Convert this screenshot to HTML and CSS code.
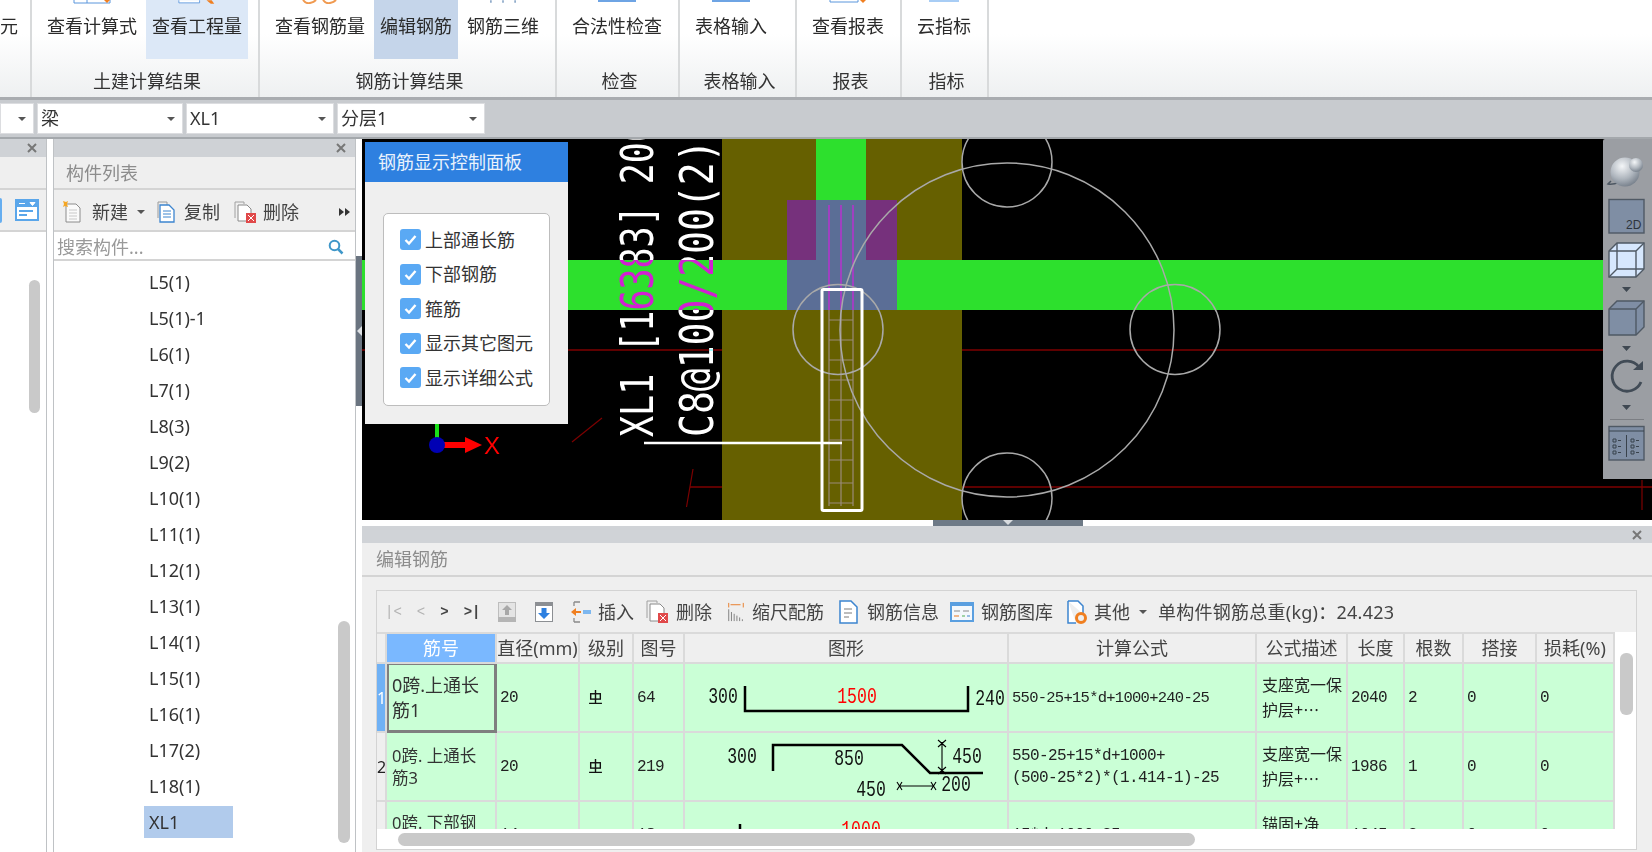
FILE: index.html
```html
<!DOCTYPE html>
<html lang="zh-CN">
<head>
<meta charset="utf-8">
<title>编辑钢筋</title>
<link rel="stylesheet" href="styles.css">
</head>
<body>
<header class="ribbon">
  <section class="group g0">
    <div class="btns end"><div class="btn first"><span>元</span></div></div>
    <div class="glabel"></div>
  </section>
  <section class="group g1">
    <div class="btns">
      <div class="btn"><svg class="ico" viewBox="0 0 38 4"><path d="M1 0v3h36V0M14 0v3" fill="#fff" stroke="#5a96dc"/><path d="M31 0h6l-3 3z" fill="#f07f20"/></svg><span>查看计算式</span></div>
      <div class="btn hl"><svg class="ico" viewBox="0 0 44 4"><path d="M1 0v3h24V0" fill="#fff" stroke="#5a96dc"/><path d="M33 0h6l3 4h-4z" fill="#f07f20"/></svg><span>查看工程量</span></div>
    </div>
    <div class="glabel">土建计算结果</div>
  </section>
  <section class="group g2">
    <div class="btns">
      <div class="btn"><svg class="ico" viewBox="0 0 38 4"><path d="M2 0q3 4 7 3t6-3M22 0q3 4 7 3t6-3" fill="none" stroke="#f09a50" stroke-width="2"/></svg><span>查看钢筋量</span></div>
      <div class="btn sel"><span>编辑钢筋</span></div>
      <div class="btn"><svg class="ico" viewBox="0 0 44 4"><path d="M8 0v3M22 0v3M36 0v3" stroke="#6a8fb8" stroke-width="1.5"/></svg><span>钢筋三维</span></div>
    </div>
    <div class="glabel">钢筋计算结果</div>
  </section>
  <section class="group g3">
    <div class="btns"><div class="btn"><svg class="ico" viewBox="0 0 38 4"><rect width="38" height="2" fill="#6ea4e4"/></svg><span>合法性检查</span></div></div>
    <div class="glabel">检查</div>
  </section>
  <section class="group g4">
    <div class="btns"><div class="btn"><svg class="ico" viewBox="0 0 38 4"><rect width="38" height="2" fill="#6ea4e4"/></svg><span>表格输入</span></div></div>
    <div class="glabel">表格输入</div>
  </section>
  <section class="group g5">
    <div class="btns"><div class="btn"><svg class="ico" viewBox="0 0 38 4"><path d="M1 0v2h28V0" fill="#fff" stroke="#5a96dc"/><path d="M31 0h6l-3 3z" fill="#f07f20"/></svg><span>查看报表</span></div></div>
    <div class="glabel">报表</div>
  </section>
  <section class="group g6">
    <div class="btns"><div class="btn"><svg class="ico" viewBox="0 0 38 4"><rect x="4" width="30" height="2" fill="#a8cdf5"/></svg><span>云指标</span></div></div>
    <div class="glabel">指标</div>
  </section>
</header>

<div class="selbar">
  <div class="combo c0"><i class="tri"></i></div>
  <div class="combo c1"><span>梁</span><i class="tri"></i></div>
  <div class="combo c2"><span>XL1</span><i class="tri"></i></div>
  <div class="combo c2"><span>分层1</span><i class="tri"></i></div>
</div>

<main class="main">
  <aside class="panel panel-a">
    <div class="phead"><svg class="x" viewBox="0 0 10 10"><path d="M1 1l8 8M9 1l-8 8"/></svg></div>
    <div class="ptitle"></div>
    <div class="ptool end">
      <i class="seltab"></i>
      <svg class="win" viewBox="0 0 24 24"><rect x="1" y="2" width="22" height="20" fill="#fff" stroke="#5aa6ea" stroke-width="2"/><rect x="1" y="2" width="22" height="7" fill="#5aa6ea"/><path d="M4 5.500h6M15 4.500h5l-2.500 3z" stroke="#fff" fill="#fff"/><path d="M4 13h14M4 17h8" stroke="#5aa6ea" stroke-width="2"/></svg>
    </div>
    <div class="abody"><div class="athumb"></div></div>
  </aside>

  <aside class="panel panel-b">
    <div class="phead"><svg class="x" viewBox="0 0 10 10"><path d="M1 1l8 8M9 1l-8 8"/></svg></div>
    <div class="ptitle">构件列表</div>
    <div class="ptool">
      <svg class="tic new" viewBox="0 0 18 22"><path d="M3 3h10l4 4v14H3z" fill="#fafafa" stroke="#8c8c8c"/><path d="M6 9h8M6 12h8M6 15h8M6 18h8" stroke="#c8c8c8"/><path d="M0 0l3 1 2-1-1 3 1 3-3-1-2 1 1-3z" fill="#f5a623"/></svg>
      <span class="ttext first">新建</span><i class="tri t1"></i>
      <svg class="tic cp" viewBox="0 0 18 22"><path d="M1 1h9v3M1 1v16" fill="none" stroke="#9a9a9a"/><path d="M3 4h9l5 5v12H3z" fill="#fff" stroke="#3d85cf" stroke-width="1.300"/><path d="M6 10h8M6 13h8M6 16h8" stroke="#3d85cf"/></svg>
      <span class="ttext">复制</span>
      <svg class="tic del" viewBox="0 0 22 22"><path d="M1 1h9v2M1 1v16" fill="none" stroke="#a0a0a0"/><path d="M4 4h9l4 4v12H4z" fill="#fff" stroke="#8a8a8a"/><rect x="12" y="12" width="10" height="10" fill="#e0494a"/><path d="M14 14l6 6M20 14l-6 6" stroke="#fff"/></svg>
      <span class="ttext">删除</span>
      <span class="more"><i class="rtri"></i><i class="rtri"></i></span>
    </div>
    <div class="search"><span>搜索构件...</span>
      <svg class="mag" viewBox="0 0 16 16"><circle cx="6.500" cy="6.500" r="4.800" fill="none" stroke="#3f97c9" stroke-width="2"/><path d="M10 10l4.500 4.500" stroke="#3f97c9" stroke-width="2.500"/></svg>
    </div>
    <div class="list">
      <div class="item">L5(1)</div><div class="item">L5(1)-1</div><div class="item">L6(1)</div><div class="item">L7(1)</div>
      <div class="item">L8(3)</div><div class="item">L9(2)</div><div class="item">L10(1)</div><div class="item">L11(1)</div>
      <div class="item">L12(1)</div><div class="item">L13(1)</div><div class="item">L14(1)</div><div class="item">L15(1)</div>
      <div class="item">L16(1)</div><div class="item">L17(2)</div><div class="item">L18(1)</div><div class="item cur">XL1</div>
      <div class="lthumb"></div>
    </div>
  </aside>

  <div class="split"><div class="split-h"><i class="ltri"></i></div></div>

  <div class="right">
    <div class="canvas">
      <svg class="cad" viewBox="362 139 1290 381">
        <rect x="362" y="139" width="1290" height="381" fill="#000"/>
        <path d="M362 350H1652M690 487H1652" stroke="#7d0000" stroke-width="1.500" fill="none"/>
        <path d="M572 442L602 418M686.500 507L693 469M1642 480V510" stroke="#7d0000" stroke-width="1.200" fill="none"/>
        <rect x="722" y="139" width="240" height="381" fill="#666000"/>
        <rect x="362" y="260" width="1290" height="50" fill="#2de02d"/>
        <rect x="816" y="139" width="50" height="61" fill="#2de02d"/>
        <rect x="787" y="200" width="110" height="60" fill="#76317c"/>
        <rect x="787" y="260" width="110" height="50" fill="#5b6e96"/>
        <rect x="816" y="200" width="50" height="60" fill="#5b6e96"/>
        <path d="M829 205V310M841 205V310M853 205V310" stroke="#a040c0" stroke-width="2" fill="none"/>
        <path d="M829 310V506M841 310V506M853 310V506M829 320H853M829 340H853M829 360H853M829 380H853M829 400H853M829 420H853M829 440H853M829 460H853M829 483H853M829 503H853" stroke="#9a8a78" stroke-width="1.200" fill="none"/>
        <g fill="none" stroke="#a9a9a9" stroke-width="1.500">
          <circle cx="1007" cy="330" r="167"/><circle cx="1007" cy="162" r="45"/><circle cx="1007" cy="498" r="45"/><circle cx="1175" cy="329.500" r="45"/><circle cx="838" cy="329.500" r="45"/>
        </g>
        <rect x="822" y="289.500" width="40" height="221" rx="1.500" fill="none" stroke="#fff" stroke-width="3"/>
        <path d="M644 443H842" stroke="#fff" stroke-width="2.500"/>
        <text class="cadtext l1" transform="translate(653 437) rotate(-90) scale(1 1.280)">XL1 [16383] 200</text>
        <text class="cadtext l2" transform="translate(713 437) rotate(-90) scale(1 1.200)">C8@100/200(2)</text>
        <rect x="435" y="415" width="4" height="24" fill="#19e019"/>
        <path d="M437 442H465V437L482 445L465 453V448H437z" fill="#ff0000"/>
        <circle cx="437" cy="445" r="8" fill="#0000b4"/>
        <text class="axis" x="484" y="454">X</text>
      </svg>

      <div class="float">
        <div class="float-h">钢筋显示控制面板</div>
        <div class="float-b">
          <div class="checks">
            <label class="chk"><svg class="box" viewBox="0 0 21 21"><rect width="21" height="21" rx="3" fill="#5aa9f4"/><path d="M5.500 11l3.500 3.500 6.500-7.500" fill="none" stroke="#fff" stroke-width="2.400"/></svg>上部通长筋</label>
            <label class="chk"><svg class="box" viewBox="0 0 21 21"><rect width="21" height="21" rx="3" fill="#5aa9f4"/><path d="M5.500 11l3.500 3.500 6.500-7.500" fill="none" stroke="#fff" stroke-width="2.400"/></svg>下部钢筋</label>
            <label class="chk"><svg class="box" viewBox="0 0 21 21"><rect width="21" height="21" rx="3" fill="#5aa9f4"/><path d="M5.500 11l3.500 3.500 6.500-7.500" fill="none" stroke="#fff" stroke-width="2.400"/></svg>箍筋</label>
            <label class="chk"><svg class="box" viewBox="0 0 21 21"><rect width="21" height="21" rx="3" fill="#5aa9f4"/><path d="M5.500 11l3.500 3.500 6.500-7.500" fill="none" stroke="#fff" stroke-width="2.400"/></svg>显示其它图元</label>
            <label class="chk"><svg class="box" viewBox="0 0 21 21"><rect width="21" height="21" rx="3" fill="#5aa9f4"/><path d="M5.500 11l3.500 3.500 6.500-7.500" fill="none" stroke="#fff" stroke-width="2.400"/></svg>显示详细公式</label>
          </div>
        </div>
      </div>

      <div class="rail">
        <svg viewBox="0 0 49 340" width="49" height="340">
          <defs><radialGradient id="ball" cx="0.400" cy="0.300" r="0.800"><stop offset="0" stop-color="#f4f6f8"/><stop offset="0.550" stop-color="#aeb5bd"/><stop offset="1" stop-color="#68727e"/></radialGradient></defs>
          <path d="M8 42L5 45Q12 47 30 36" fill="none" stroke="#4d5762" stroke-width="1.500"/>
          <circle cx="22" cy="33" r="14.500" fill="url(#ball)"/>
          <circle cx="33" cy="26" r="7" fill="url(#ball)"/>
          <rect x="6" y="60.500" width="35" height="33.500" fill="#7f8ea4" stroke="#4f5964" stroke-width="1.400"/>
          <text class="rail2d" x="23" y="90">2D</text>
          <g stroke="#4f5964" stroke-width="1.400">
            <path d="M6 112l8-8h27v26l-8 8H6z" fill="#d6e7fd"/>
            <path d="M14 104v26h27M14 130l-8 8" fill="none"/>
            <path d="M6 112h27v26M33 112l8-8" fill="none"/>
            <path d="M6 170l8-8h27v26l-8 8H6z" fill="#7f8ea4"/>
            <path d="M6 170h27v26M33 170l8-8" fill="none"/>
            <rect x="6" y="287.500" width="35" height="33.500" fill="#7f8ea4"/>
          </g>
          <path d="M19 148h9l-4.500 5zM19 207h9l-4.500 5zM19 266h9l-4.500 5z" fill="#3f4852"/>
          <path d="M36 228A15 15 0 1 0 38 243" fill="none" stroke="#414b56" stroke-width="2.800"/>
          <path d="M30 231h10v-9z" fill="#414b56"/>
          <path d="M7 280.500H41" stroke="#7b7e83" stroke-width="1.200"/>
          <path d="M6 292H41M23.500 296V318M10 300h3v3h-3zM10 306h3v3h-3zM10 312h3v3h-3zM28 300h3v3h-3zM28 306h3v3h-3zM28 312h3v3h-3zM15 301.500h3M15 307.500h3M15 313.500h3M33 301.500h3M33 307.500h3M33 313.500h3" fill="none" stroke="#39424c" stroke-width="1"/>
        </svg>
      </div>
    </div>

    <div class="strip"><div class="handle"><i class="dtri"></i></div></div>

    <section class="editor">
      <div class="phead ehead"><svg class="x" viewBox="0 0 10 10"><path d="M1 1l8 8M9 1l-8 8"/></svg></div>
      <div class="ptitle etitle">编辑钢筋</div>
      <div class="ebody">
        <div class="box-out">
          <div class="etool">
            <div class="nav"><span class="dim">|&lt;</span><span class="dim">&lt;</span><span>&gt;</span><span>&gt;|</span></div>
            <svg class="tool-i w18" viewBox="0 0 18 20"><rect x="0.500" y="0.500" width="17" height="19" fill="#e4e4e4" stroke="#bdbdbd"/><rect y="15" width="18" height="5" fill="#b5b5b5"/><path d="M9 3l5 5h-3v5H7V8H4z" fill="#a8a8a8"/></svg>
            <svg class="tool-i w18 ml19" viewBox="0 0 18 20"><rect x="0.500" y="0.500" width="17" height="19" fill="#fff" stroke="#8c8f93"/><rect width="18" height="4" fill="#8c8f93"/><path d="M9 17l-6-6h3.500V6h5v5H15z" fill="#2e80e0"/></svg>
            <div class="tool ml18"><svg class="w20" viewBox="0 0 20 22"><path d="M3 1h6M3 1v4M3 21h6M3 21v-4" fill="none" stroke="#8a8a8a" stroke-width="1.300"/><path d="M0 11l5-4v3h5v2H5v3z" fill="#f07f20"/><rect x="12" y="9" width="8" height="4" fill="#7db7ef"/></svg><span>插入</span></div>
            <div class="tool"><svg class="w23" viewBox="0 0 23 24"><path d="M1 1h10v2M1 1v17" fill="none" stroke="#a0a0a0"/><path d="M4 4h10l4 4v13H4z" fill="#fff" stroke="#8a8a8a"/><rect x="12" y="13" width="10" height="10" fill="#e0494a"/><path d="M14 15l6 6M20 15l-6 6" stroke="#fff"/></svg><span>删除</span></div>
            <div class="tool ml15"><svg class="w18" viewBox="0 0 18 22"><path d="M1 1v5M17 1v5M3 3h11" stroke="#e8761e" fill="none"/><path d="M1 8v13M4 11v10M7 13v8M10 15v6M13 17v4M16 19v2" stroke="#7a7a7a"/></svg><span>缩尺配筋</span></div>
            <div class="tool ml13"><svg class="w23" viewBox="0 0 23 24"><path d="M3 1h11l6 6v16H3z" fill="#fff" stroke="#3d85cf" stroke-width="1.500"/><path d="M7 9h8M7 13h8M7 17h5" stroke="#7a7a7a"/></svg><span>钢筋信息</span></div>
            <div class="tool ml11"><svg class="w24" viewBox="0 0 24 22"><rect x="1" y="2" width="22" height="18" fill="#f4f8fc" stroke="#5a9fe0" stroke-width="2"/><rect x="1" y="2" width="22" height="3" fill="#5a9fe0"/><path d="M4 10h6M13 10h6" stroke="#8a8a8a"/><path d="M4 15h5" stroke="#e8761e"/><path d="M12 15h3" stroke="#4caf50"/><path d="M17 15h3" stroke="#3d85cf"/></svg><span>钢筋图库</span></div>
            <div class="tool ml13"><svg class="w21" viewBox="0 0 21 24"><path d="M2 1h10l5 5v8M2 1v22h8" fill="#fff" stroke="#3d85cf" stroke-width="1.500"/><circle cx="15" cy="18" r="4.500" fill="none" stroke="#f07f20" stroke-width="3"/></svg><span>其他</span></div>
            <i class="tri t2"></i>
            <span class="total">单构件钢筋总重(kg)：24.423</span>
          </div>
          <div class="mid">
            <div class="twrap">
              <table class="grid">
                <colgroup><col class="c-r"><col class="c-id"><col class="c-dia"><col class="c-lvl"><col class="c-no"><col class="c-shape"><col class="c-f"><col class="c-d"><col class="c-len"><col class="c-cnt"><col class="c-lap"><col class="c-loss"></colgroup>
                <thead>
                  <tr><th></th><th class="hot">筋号</th><th>直径(mm)</th><th>级别</th><th>图号</th><th>图形</th><th>计算公式</th><th>公式描述</th><th>长度</th><th>根数</th><th>搭接</th><th>损耗(%)</th></tr>
                </thead>
                <tbody>
                  <tr>
                    <td class="rh rh-on">1</td><td class="idc cursor">0跨.上通长筋1</td><td class="m">20</td>
                    <td class="lv"><svg class="grade" viewBox="0 0 14 14"><rect x="2.500" y="3.500" width="9" height="5" fill="none" stroke="#111" stroke-width="1.300"/><path d="M7 0v13M1 12.500h12" stroke="#111" stroke-width="1.300"/></svg></td>
                    <td class="m">64</td>
                    <td class="sh"><svg class="shape" viewBox="1 0 321 67">
                      <path d="M61 22V47H284V22" fill="none" stroke="#000" stroke-width="2.500"/>
                      <text class="st" transform="translate(39 39) scale(1 1.300)">300</text>
                      <text class="st red" transform="translate(173 39) scale(1 1.300)">1500</text>
                      <text class="st" transform="translate(306 41) scale(1 1.300)">240</text>
                    </svg></td>
                    <td class="m f one">550-25+15*d+1000+240-25</td>
                    <td class="d">支座宽一保护层+⋯</td><td class="m">2040</td><td class="m">2</td><td class="m">0</td><td class="m">0</td>
                  </tr>
                  <tr>
                    <td class="rh">2</td><td class="idc small">0跨. 上通长筋3</td><td class="m">20</td>
                    <td class="lv"><svg class="grade" viewBox="0 0 14 14"><rect x="2.500" y="3.500" width="9" height="5" fill="none" stroke="#111" stroke-width="1.300"/><path d="M7 0v13M1 12.500h12" stroke="#111" stroke-width="1.300"/></svg></td>
                    <td class="m">219</td>
                    <td class="sh"><svg class="shape" viewBox="1 0 321 67">
                      <path d="M89 38V12H218L246 40H299" fill="none" stroke="#000" stroke-width="2.500"/>
                      <path d="M258 9V40M254 7L262 14M262 7L254 14M254 34L262 41M262 34L254 41M215 53H250M213 49L218 57M218 49L213 57M247 49L252 57M252 49L247 57" fill="none" stroke="#000" stroke-width="1.100"/>
                      <text class="st" transform="translate(58 30) scale(1 1.300)">300</text>
                      <text class="st" transform="translate(165 32) scale(1 1.300)">850</text>
                      <text class="st" transform="translate(283 30) scale(1 1.300)">450</text>
                      <text class="st" transform="translate(187 63) scale(1 1.300)">450</text>
                      <text class="st" transform="translate(272 58) scale(1 1.300)">200</text>
                    </svg></td>
                    <td class="m f">550-25+15*d+1000+<br>(500-25*2)*(1.414-1)-25</td>
                    <td class="d">支座宽一保护层+⋯</td><td class="m">1986</td><td class="m">1</td><td class="m">0</td><td class="m">0</td>
                  </tr>
                  <tr class="cut">
                    <td class="rh"></td><td class="idc small up">0跨. 下部钢</td><td class="m">14</td>
                    <td class="lv"></td>
                    <td class="m">18</td>
                    <td class="sh"><svg class="shape" viewBox="1 0 321 67">
                      <path d="M56 22V47" stroke="#000" stroke-width="2.500"/>
                      <text class="st red" transform="translate(177 34) scale(1 1.300)">1000</text>
                    </svg></td>
                    <td class="m f">15*d+1000-25</td>
                    <td class="d up">锚固+净</td><td class="m">1045</td><td class="m">3</td><td class="m">0</td><td class="m">0</td>
                  </tr>
                </tbody>
              </table>
            </div>
            <div class="vtrack"><div class="vthumb"></div></div>
          </div>
          <div class="htrack"><div class="hthumb"></div></div>
        </div>
      </div>
    </section>
  </div>
</main>
</body>
</html>
```

FILE: styles.css
```css
* { box-sizing: border-box; }
html, body { margin: 0; padding: 0; }
body {
  width: 1652px;
  height: 852px;
  overflow: hidden;
  background: #fff;
  color: #333;
  font-family: "Noto Sans", "Noto Sans CJK SC", sans-serif;
  font-size: 18px;
  line-height: 24px;
}
svg { display: block; }

/* ribbon */
.ribbon {
  display: flex;
  height: 100px;
  border-bottom: 3px solid #a9acb0;
  background: linear-gradient(#fff 35%, #eef0f1);
}
.group { display: flex; flex-direction: column; border-right: 2px solid #d8dadb; }
.g0 { width: 32px; }
.g1 { width: 228px; }
.g2 { width: 297px; }
.g3 { width: 123px; }
.g4 { width: 117px; }
.g5 { width: 105px; }
.g6 { width: 87px; }
.btns { display: flex; gap: 3px; height: 59px; padding-left: 9px; }
.btns.end { padding-left: 0; }
.btn { position: relative; height: 59px; padding: 14px 6px 0; color: #2b2b2b; white-space: nowrap; }
.btn.first { padding-left: 0; }
.btn .ico { position: absolute; top: 0; left: 50%; width: 38px; height: 4px; margin-left: -19px; }
.btn.hl { background: #dce8f7; }
.btn.sel { background: #c5d5ea; }
.glabel { height: 38px; padding-left: 4px; line-height: 44px; text-align: center; color: #333; }

/* selector bar */
.selbar {
  display: flex;
  gap: 3px;
  height: 39px;
  padding-top: 3px;
  background: #c8cbcf;
  border-bottom: 2px solid #a4a8ac;
}
.combo {
  position: relative;
  height: 31px;
  padding-left: 3px;
  line-height: 29px;
  background: #fff;
  border: 1px solid #dcdde0;
  color: #333;
}
.c0 { width: 34px; }
.c1 { width: 146px; }
.c2 { width: 148px; }
.tri {
  display: block;
  width: 0;
  height: 0;
  border-style: solid;
  border-width: 4px 4px 0;
  border-color: #555 transparent transparent;
}
.combo .tri { position: absolute; right: 7px; top: 13px; }

/* main */
.main { display: flex; height: 713px; }
.panel { display: flex; flex-direction: column; background: #fff; }
.panel-a { width: 47px; border-right: 1px solid #bfc2c5; }
.panel-b { width: 303px; margin-left: 6px; border-left: 1px solid #bfc2c5; border-right: 1px solid #bfc2c5; }
.phead {
  display: flex;
  justify-content: flex-end;
  align-items: center;
  height: 18px;
  padding-right: 9px;
  background: #cfd2d6;
}
.x { width: 10px; height: 10px; }
.x path { stroke: #777; stroke-width: 2; fill: none; }
.ptitle {
  height: 33px;
  padding: 4px 0 0 12px;
  background: #efefef;
  border-bottom: 2px solid #d4d4d4;
  color: #8c8c8c;
}
.ptool {
  display: flex;
  align-items: center;
  height: 42px;
  padding: 3px 0 0 9px;
  background: #efefef;
  border-bottom: 2px solid #d4d4d4;
  color: #444;
}
.ptool.end { justify-content: space-between; padding: 0 7px 0 0; }
.seltab { display: block; width: 2px; height: 25px; background: #66aef0; border-radius: 0 3px 3px 0; }
.win { width: 24px; height: 24px; }
.abody { flex: 1; padding: 48px 0 0 29px; }
.athumb { width: 11px; height: 133px; border-radius: 6px; background: #c9c9c9; }
.tic { flex: none; }
.tic.new { width: 18px; height: 22px; }
.tic.cp { width: 18px; height: 22px; margin-left: 12px; }
.tic.del { width: 22px; height: 22px; margin-left: 14px; }
.ttext { margin-left: 9px; }
.ttext.first { margin-left: 11px; }
.tic.del + .ttext { margin-left: 7px; }
.t1 { margin-left: 9px; }
.more { display: flex; margin-left: auto; margin-right: 5px; }
.rtri {
  display: block;
  width: 0;
  height: 0;
  margin-left: 1px;
  border-style: solid;
  border-width: 4px 0 4px 5px;
  border-color: transparent transparent transparent #333;
}
.search {
  display: flex;
  align-items: center;
  justify-content: space-between;
  height: 29px;
  padding: 2px 11px 0 3px;
  border-bottom: 2px solid #d4d4d4;
  color: #999;
}
.mag { width: 16px; height: 16px; }
.list { position: relative; flex: 1; display: flex; flex-direction: column; gap: 4px; padding: 5px 0 0 90px; }
.item { width: 89px; height: 32px; padding-left: 5px; line-height: 32px; color: #333; }
.item.cur { background: #b1cbec; }
.lthumb { position: absolute; right: 5px; top: 360px; width: 12px; height: 222px; border-radius: 6px; background: #c9c9c9; }

.split { width: 6px; background: #fff; padding-top: 117px; }
.split-h { display: flex; align-items: center; justify-content: center; height: 150px; background: #6a7480; }
.ltri { display: block; width: 0; height: 0; border-style: solid; border-width: 5px 5px 5px 0; border-color: transparent #dfe2e5 transparent transparent; }

.right { width: 1290px; }
.canvas { position: relative; height: 381px; background: #000; overflow: hidden; }
.cad { width: 1290px; height: 381px; }
.cadtext { fill: #fff; font-family: "DejaVu Sans Mono", monospace; mix-blend-mode: difference; }
.cadtext.l1 { font-size: 35px; }
.cadtext.l2 { font-size: 38px; }
.axis { fill: #f00; font-family: "Liberation Sans", sans-serif; font-size: 24px; }

.float { position: absolute; left: 3px; top: 3px; width: 203px; height: 282px; background: #efefef; }
.float-h { height: 40px; padding: 8px 0 0 13px; background: #2e80e0; color: #eaf2fc; }
.float-b { padding: 31px 18px 0 18px; }
.checks {
  display: flex;
  flex-direction: column;
  height: 193px;
  padding: 15px 0 0 16px;
  background: #fff;
  border: 1px solid #bdbdbd;
  border-radius: 5px;
  gap: 13.500px;
}
.chk { display: flex; align-items: center; gap: 4px; height: 21px; color: #333; }
.box { width: 21px; height: 21px; flex: none; }

.rail { position: absolute; right: 0; top: 0; width: 49px; height: 340px; background: #9b9ea3; border-radius: 2px 0 0 0; }
.rail2d { fill: #2d343c; font-family: "Liberation Sans", sans-serif; font-size: 12px; }

.strip { height: 6px; padding-left: 571px; background: #fff; }
.handle { display: flex; justify-content: center; width: 150px; height: 6px; background: #6e7a87; }
.dtri { display: block; width: 0; height: 0; border-style: solid; border-width: 5px 5px 0; border-color: #d8dbdf transparent transparent; }

/* editor */
.editor { height: 326px; background: #efefef; }
.ehead { height: 17px; padding-right: 10px; background: #d0d3d7; }
.etitle { padding-left: 14px; height: 34px; }
.ebody { padding: 13px 0 0 14px; }
.box-out { width: 1261px; height: 260px; border: 1px solid #d3d3d3; background: #fff; }
.etool {
  display: flex;
  align-items: center;
  height: 41px;
  padding-left: 8px;
  background: #efefef;
  color: #444;
}
.nav { display: flex; gap: 15px; width: 113px; font-family: "Liberation Mono", monospace; font-size: 14px; font-weight: bold; color: #444; }
.nav .dim { color: #b3b3b3; font-weight: normal; }
.tool-i { flex: none; }
.w18 { width: 18px; height: 20px; }
.w20 { width: 20px; height: 22px; }
.w21 { width: 21px; height: 24px; }
.w23 { width: 23px; height: 24px; }
.w24 { width: 24px; height: 22px; }
.ml19 { margin-left: 19px; }
.tool { display: flex; align-items: center; gap: 7px; margin-left: 12px; white-space: nowrap; }
.tool.ml18 { margin-left: 18px; }
.tool.ml15 { margin-left: 15px; }
.tool.ml13 { margin-left: 13px; }
.tool.ml11 { margin-left: 11px; }
.t2 { margin-left: 9px; }
.total { margin-left: 11px; letter-spacing: 0.250px; white-space: nowrap; }

.mid { display: flex; height: 197px; }
.twrap { width: 1238px; height: 197px; overflow: hidden; }
.grid { width: 1238px; table-layout: fixed; border-collapse: separate; border-spacing: 0; }
.c-r { width: 10px; }
.c-id { width: 110px; }
.c-dia { width: 83px; }
.c-lvl { width: 54px; }
.c-no { width: 51px; }
.c-shape { width: 324px; }
.c-f { width: 248px; }
.c-d { width: 91px; }
.c-len { width: 57px; }
.c-cnt { width: 59px; }
.c-lap { width: 73px; }
.c-loss { width: 78px; }
.grid th {
  height: 32px;
  padding: 0;
  background: #efefef;
  border-right: 2px solid #dadada;
  border-bottom: 2px solid #dadada;
  border-top: 2px solid #dadada;
  font-weight: normal;
  color: #444;
  white-space: nowrap;
  overflow: hidden;
}
.grid th.hot { background: #7ab8ff; color: #fff; }
.grid td {
  height: 69px;
  padding: 0 0 0 3px;
  background: #caffd6;
  border-right: 2px solid #dadada;
  border-bottom: 2px solid #dadada;
  color: #222;
  vertical-align: middle;
}
.grid td.rh { padding: 0; background: #efefef; text-align: center; font-size: 16px; overflow: hidden; }
.grid td.rh-on { background: #6fb1f5; color: #fff; }
.grid td.idc { padding: 0 3px 0 5px; line-height: 25px; color: #333; }
.grid td.idc.cursor { padding-left: 3px; }
.grid td.idc.small { font-size: 16.500px; line-height: 22px; }
.grid td.cursor { border: 2px solid #7f7f7f; border-width: 1px 3px 3px 2px; }
.grid td.m { font-family: "Liberation Mono", monospace; font-size: 16px; line-height: 22px; letter-spacing: -0.600px; }
.grid td.f.one { font-size: 15.500px; letter-spacing: -0.730px; }
.grid td.d { padding: 0 0 0 5px; font-size: 16px; line-height: 25px; }
.grid td.lv { padding-left: 8px; }
.grid td.sh { padding: 0; }
.grade { width: 15px; height: 15px; }
.shape { width: 321px; height: 67px; }
.st { fill: #111; font-family: "Liberation Mono", monospace; font-size: 16.500px; text-anchor: middle; }
.st.red { fill: #f00; }
.cut td { vertical-align: top; padding-top: 22px; }
.grid .cut td.idc, .grid .cut td.d { padding-top: 10px; }
.grid .cut td.sh { padding-top: 0; }

.vtrack { width: 21px; padding: 21px 0 0 5px; background: #fff; }
.vthumb { width: 13px; height: 62px; border-radius: 6px; background: #c9c9c9; }
.htrack { height: 20px; padding: 4px 0 0 21px; background: #fff; }
.hthumb { width: 797px; height: 13px; border-radius: 7px; background: #c9c9c9; }
```
